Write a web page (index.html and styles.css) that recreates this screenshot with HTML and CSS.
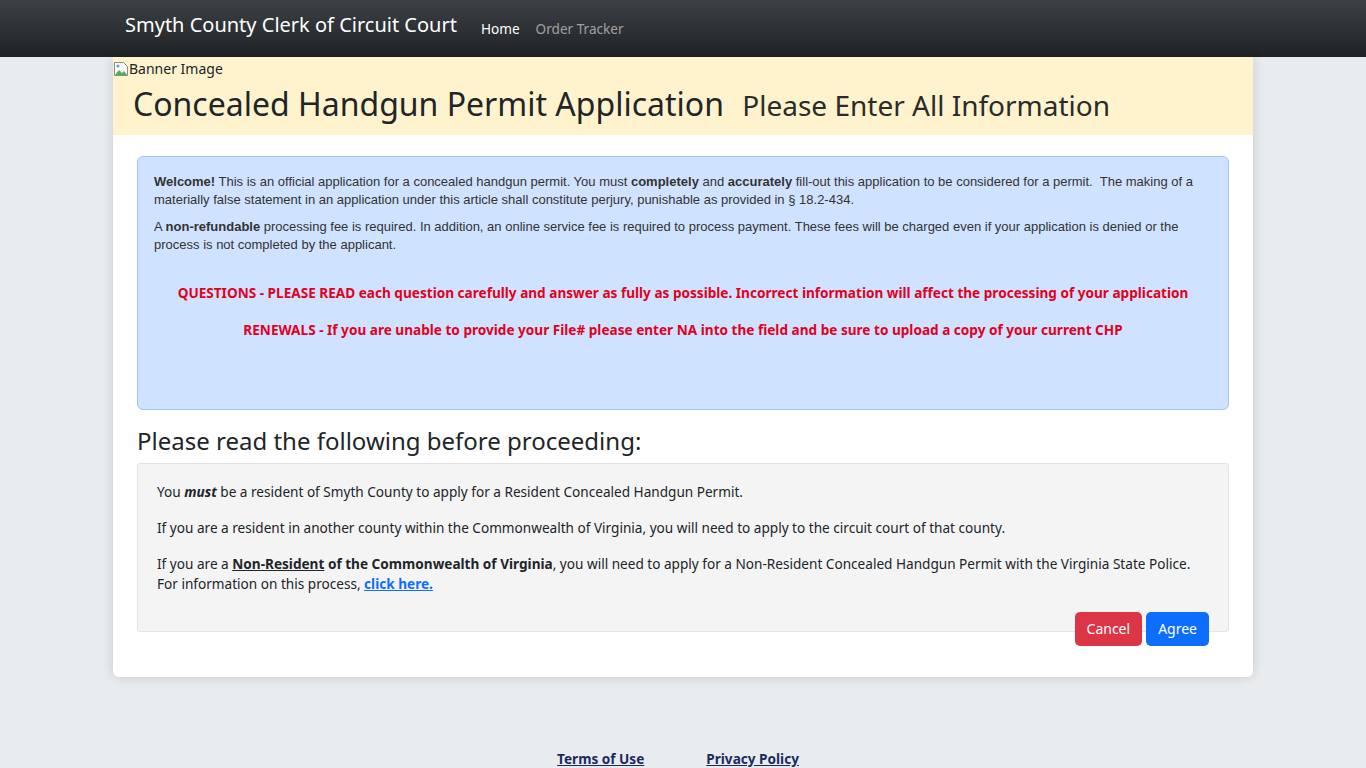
FILE: index.html
```html
<!DOCTYPE html>
<html lang="en">
<head>
  <meta charset="UTF-8">
  <meta name="viewport" content="width=device-width, initial-scale=1.0">
  <title>Concealed Handgun Permit Application</title>
  <link rel="stylesheet" href="styles.css">
</head>
<body>
  <nav class="topbar">
    <div class="wrap">
      <a class="brand" href="#">Smyth County Clerk of Circuit Court</a>
      <ul class="nav-links">
        <li><a class="active" href="#">Home</a></li>
        <li><a href="#">Order Tracker</a></li>
      </ul>
    </div>
  </nav>

  <main class="card">
    <div class="banner">
      <span class="banner-img">
        <svg width="16" height="16" viewBox="0 0 16 16" aria-hidden="true">
          <path d="M1.5 1.5h9l4 4v9h-13z" fill="#fff" stroke="#8c8c8c"/>
          <path d="M2 14l4-5 3 3 2-2 3 4z" fill="#4caf50"/>
          <circle cx="5" cy="5" r="1.5" fill="#5b9bd5"/>
        </svg>Banner Image
      </span>
      <h1>Concealed Handgun Permit Application <small>Please Enter All Information</small></h1>
    </div>

    <div class="card-body">
      <div class="alert">
        <p><b>Welcome!</b> This is an official application for a concealed handgun permit. You must <b>completely</b> and <b>accurately</b> fill-out this application to be considered for a permit.&nbsp; The making of a materially false statement in an application under this article shall constitute perjury, punishable as provided in &sect; 18.2-434.</p>
        <p class="fees">A <b>non-refundable</b> processing fee is required. In addition, an online service fee is required to process payment. These fees will be charged even if your application is denied or the process is not completed by the applicant.</p>
        <p class="warn">QUESTIONS - PLEASE READ each question carefully and answer as fully as possible. Incorrect information will affect the processing of your application</p>
        <p class="warn">RENEWALS - If you are unable to provide your File# please enter NA into the field and be sure to upload a copy of your current CHP</p>
      </div>

      <h3>Please read the following before proceeding:</h3>
      <div class="notice">
        <p>You <b><i>must</i></b> be a resident of Smyth County to apply for a Resident Concealed Handgun Permit.</p>
        <p>If you are a resident in another county within the Commonwealth of Virginia, you will need to apply to the circuit court of that county.</p>
        <p>If you are a <b><u>Non-Resident</u> of the Commonwealth of Virginia</b>, you will need to apply for a Non-Resident Concealed Handgun Permit with the Virginia State Police.<br>For information on this process, <a href="#">click here.</a></p>
      </div>
      <div class="actions">
        <button type="button" class="btn btn-cancel">Cancel</button>
        <button type="button" class="btn btn-agree">Agree</button>
      </div>
    </div>
  </main>

  <footer class="footer">
    <a href="#">Terms of Use</a>
    <a href="#">Privacy Policy</a>
  </footer>
</body>
</html>
```

FILE: styles.css
```css
html, body {
  overflow: hidden;
}
body {
  margin: 0;
  font-family: 'Noto Sans', 'Open Sans', sans-serif;
  font-size: 13.6px;
  line-height: 20px;
  color: #212529;
  background: #e9ecef;
}

/* top navigation */
.topbar {
  height: 57px;
  background: linear-gradient(#3c4145, #1f2225);
}
.wrap {
  width: 1140px;
  margin: 0 auto;
  padding: 0 12px;
  box-sizing: border-box;
  display: flex;
  align-items: center;
  height: 100%;
}
.brand {
  color: #fff;
  font-size: 20px;
  text-decoration: none;
  margin-top: -7px;
}
.nav-links {
  list-style: none;
  display: flex;
  gap: 16px;
  margin: 0 0 0 24px;
  padding: 0;
}
.nav-links a {
  color: rgba(255, 255, 255, 0.55);
  text-decoration: none;
  font-size: 13.6px;
}
.nav-links a.active {
  color: #fff;
}

/* main card */
.card {
  display: block;
  width: 1140px;
  margin: 0 auto;
  background: #fff;
  border-radius: 0 0 6px 6px;
  box-shadow: 0 0 12px rgba(0, 0, 0, 0.15);
}
.banner {
  background: #fff3cd;
  padding: 0 20px 10px;
}
.banner-img {
  display: flex;
  align-items: center;
  margin-left: -20px;
  height: 23px;
  font-size: 14px;
  color: #212529;
}
.banner h1 {
  margin: 4px 0 0;
  font-size: 32px;
  line-height: 40px;
  font-weight: 400;
}
.banner h1 small {
  font-size: 28px;
  margin-left: 10px;
  color: #2b2b2b;
}
.card-body {
  padding: 21px 24px 31px;
}

/* blue info box */
.alert {
  background: #cfe2ff;
  border: 1px solid #9ec5fe;
  border-radius: 6px;
  padding: 16px 16px 52px;
  font-family: 'Liberation Sans', Arial, sans-serif;
  font-size: 13px;
  line-height: 18px;
  color: #333;
}
.alert p {
  margin: 0 0 9px;
}
.alert .fees {
  margin-bottom: 29px;
}
.alert .warn {
  font-family: 'Noto Sans', sans-serif;
  font-weight: 700;
  font-size: 13.6px;
  line-height: 20px;
  color: #e2001d;
  text-align: center;
  margin-bottom: 17px;
}

h3 {
  font-size: 24px;
  font-weight: 400;
  line-height: 29px;
  margin: 16px 0 8px;
}

/* grey notice box */
.notice {
  background: #f4f4f4;
  border: 1px solid #e3e3e3;
  border-radius: 3px;
  padding: 18px 19px 21px;
}
.notice p {
  margin: 0 0 16px;
}
.notice a {
  color: #0d6efd;
  font-weight: 700;
}

.actions {
  display: flex;
  justify-content: flex-end;
  gap: 4px;
  margin: -20px 20px 0 0;
}
.btn {
  font-family: inherit;
  font-size: 14px;
  color: #fff;
  border: none;
  border-radius: 5px;
  padding: 7px 12px;
  line-height: 20px;
  cursor: pointer;
}
.btn-cancel {
  background: #dc3545;
}
.btn-agree {
  background: #0d6efd;
}

/* footer */
.footer {
  display: flex;
  justify-content: center;
  gap: 62px;
  margin-top: 72px;
  padding-right: 10px;
}
.footer a {
  color: #1a2a5e;
  font-weight: 700;
}
```
